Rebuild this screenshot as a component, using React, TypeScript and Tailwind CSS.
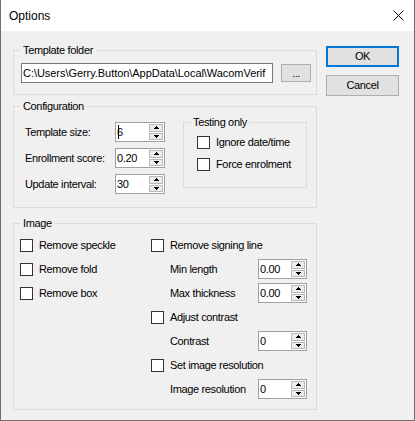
import type { ReactNode } from 'react'

function Box() {
  return <span className="h-[13px] w-[13px] shrink-0 border border-[#333333] bg-white" />
}

function Check({ label, row = 'h-[24px]' }: { label: string; row?: string }) {
  return (
    <div className={`flex items-center gap-[6px] ${row}`}>
      <Box />
      <span>{label}</span>
    </div>
  )
}

function Arrow({ up }: { up?: boolean }) {
  return (
    <svg width="5" height="3" viewBox="0 0 5 3" shapeRendering="crispEdges">
      {up ? (
        <>
          <rect x="2" y="0" width="1" height="1" fill="#000" />
          <rect x="1" y="1" width="3" height="1" fill="#000" />
          <rect x="0" y="2" width="5" height="1" fill="#000" />
        </>
      ) : (
        <>
          <rect x="0" y="0" width="5" height="1" fill="#000" />
          <rect x="1" y="1" width="3" height="1" fill="#000" />
          <rect x="2" y="2" width="1" height="1" fill="#000" />
        </>
      )}
    </svg>
  )
}

function Spin({ value, width, caret }: { value: string; width: string; caret?: boolean }) {
  return (
    <div className={`flex h-[20px] shrink-0 border border-[#a0a0a0] bg-white ${width}`}>
      <div className="relative flex flex-1 items-center pl-[1px]">
        {caret && <span className="absolute left-[2px] top-[2px] h-[14px] w-[1px] bg-black" />}
        {value}
      </div>
      <div className="flex w-[15px] flex-col gap-[1px] py-[1px] pr-[1px]">
        <div className="flex flex-1 items-center justify-center border border-[#b9b9b9] bg-[#ececec]">
          <Arrow up />
        </div>
        <div className="flex flex-1 items-center justify-center border border-[#b9b9b9] bg-[#ececec]">
          <Arrow />
        </div>
      </div>
    </div>
  )
}

function Group({ label, className, children }: { label: string; className: string; children: ReactNode }) {
  return (
    <fieldset className={`border border-[#dcdcdc] ${className}`}>
      <legend className="ml-[6px] px-[3px] leading-[14px]">{label}</legend>
      {children}
    </fieldset>
  )
}

const CONFIG_ROWS: [string, string][] = [
  ['Template size:', '6'],
  ['Enrollment score:', '0.20'],
  ['Update interval:', '30'],
]

export default function App() {
  return (
    <div className="flex h-[421px] w-[415px] flex-col border-x border-b border-[#6f6f6f] bg-[#f0f0f0] font-['Liberation_Sans',Arial,sans-serif] text-[11px] tracking-[-0.35px] text-black">
      <div className="flex h-[31px] shrink-0 items-center justify-between bg-white pl-[8px] pr-[10px]">
        <span className="text-[12px] tracking-normal">Options</span>
        <svg width="11" height="11" viewBox="0 0 11 11">
          <path d="M0.5 0.5 L10.5 10.5 M10.5 0.5 L0.5 10.5" stroke="#000" strokeWidth="1" />
        </svg>
      </div>

      <div className="flex gap-[9px] pl-[12px]">
        <div className="flex w-[304px] flex-col">
          <Group label="Template folder" className="mt-[12px] h-[52px]">
            <div className="mt-[6px] flex items-start gap-[8px] pl-[7px]">
              <div className="h-[20px] w-[252px] overflow-hidden whitespace-nowrap border border-[#7a7a7a] bg-white pl-[1px] leading-[18px] tracking-[-0.05px]">
                {'C:\\Users\\Gerry.Button\\AppData\\Local\\WacomVerif'}
              </div>
              <div className="mt-[1px] flex h-[18px] w-[30px] items-center justify-center border border-[#adadad] bg-[#e1e1e1] leading-[14px]">
                ...
              </div>
            </div>
          </Group>

          <Group label="Configuration" className="mt-[4px] h-[109px]">
            <div className="flex items-start">
              <div className="mt-[9px] flex flex-col gap-[6px] pl-[11px]">
                {CONFIG_ROWS.map(([label, value], i) => (
                  <div key={label} className="flex items-center">
                    <span className="w-[90px]">{label}</span>
                    <Spin value={value} width="w-[50px]" caret={i === 0} />
                  </div>
                ))}
              </div>
              <Group label="Testing only" className="ml-[18px] mt-[2px] h-[73px] w-[124px]">
                <div className="mt-[7px] flex flex-col gap-[9px] pl-[13px]">
                  <Check label="Ignore date/time" row="h-[13px]" />
                  <Check label="Force enrolment" row="h-[13px]" />
                </div>
              </Group>
            </div>
          </Group>

          <Group label="Image" className="mt-[8px] h-[194px]">
            <div className="mt-[3px] flex">
              <div className="flex w-[137px] flex-col pl-[6px]">
                <Check label="Remove speckle" />
                <Check label="Remove fold" />
                <Check label="Remove box" />
              </div>
              <div className="flex flex-col">
                <Check label="Remove signing line" />
                <div className="flex h-[24px] items-center pl-[19px]">
                  <span className="w-[88px]">Min length</span>
                  <Spin value="0.00" width="w-[49px]" />
                </div>
                <div className="flex h-[24px] items-center pl-[19px]">
                  <span className="w-[88px]">Max thickness</span>
                  <Spin value="0.00" width="w-[49px]" />
                </div>
                <Check label="Adjust contrast" />
                <div className="flex h-[24px] items-center pl-[19px]">
                  <span className="w-[88px]">Contrast</span>
                  <Spin value="0" width="w-[49px]" />
                </div>
                <Check label="Set image resolution" />
                <div className="flex h-[24px] items-center pl-[19px]">
                  <span className="w-[88px]">Image resolution</span>
                  <Spin value="0" width="w-[49px]" />
                </div>
              </div>
            </div>
          </Group>
        </div>

        <div className="mt-[15px] flex flex-col gap-[8px]">
          <div className="flex h-[21px] w-[73px] items-center justify-center border-2 border-[#0078d7] bg-[#e1e1e1]">
            OK
          </div>
          <div className="flex h-[21px] w-[73px] items-center justify-center border border-[#adadad] bg-[#e1e1e1]">
            Cancel
          </div>
        </div>
      </div>
    </div>
  )
}
